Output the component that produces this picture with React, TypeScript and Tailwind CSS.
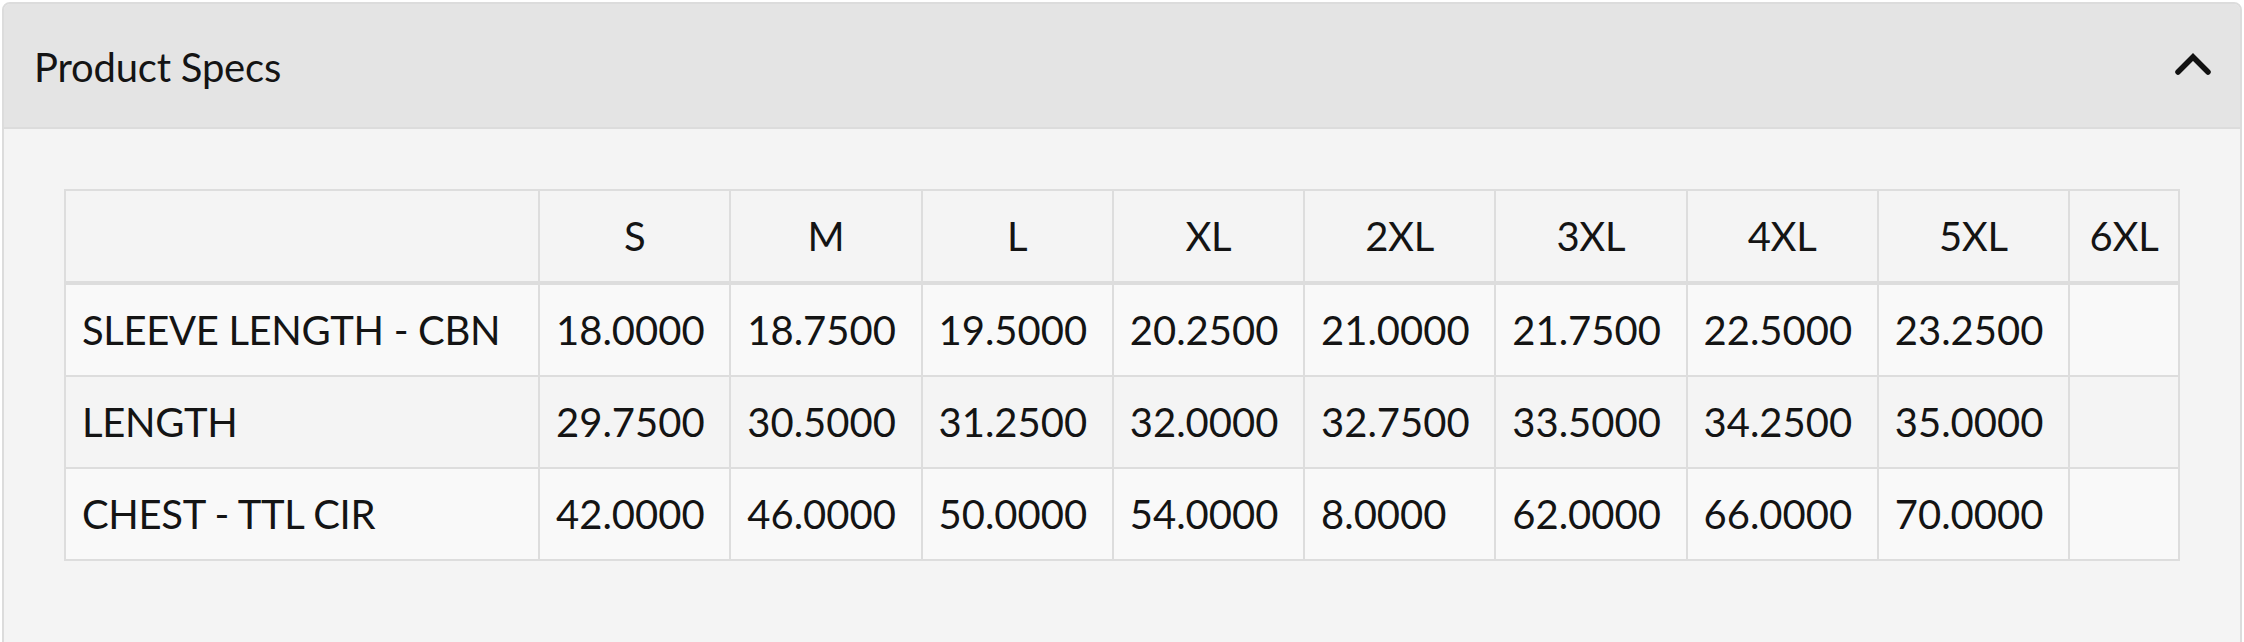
const SIZES = ["S", "M", "L", "XL", "2XL", "3XL", "4XL", "5XL", "6XL"];

const ROWS: { label: string; values: string[] }[] = [
  {
    label: "SLEEVE LENGTH - CBN",
    values: ["18.0000", "18.7500", "19.5000", "20.2500", "21.0000", "21.7500", "22.5000", "23.2500", ""],
  },
  {
    label: "LENGTH",
    values: ["29.7500", "30.5000", "31.2500", "32.0000", "32.7500", "33.5000", "34.2500", "35.0000", ""],
  },
  {
    label: "CHEST - TTL CIR",
    values: ["42.0000", "46.0000", "50.0000", "54.0000", "8.0000", "62.0000", "66.0000", "70.0000", ""],
  },
];

function ChevronUp() {
  return (
    <svg width="38" height="26" viewBox="0 0 38 26" aria-hidden="true" className="-mt-[4px]">
      <polyline
        points="4,21 19,6 34,21"
        fill="none"
        stroke="#111111"
        strokeWidth="5.5"
        strokeLinecap="round"
        strokeLinejoin="miter"
      />
    </svg>
  );
}

export default function App() {
  return (
    <div className="min-h-screen bg-white pl-[2px] pr-[2px] pt-[2px] font-['Lato','Liberation_Sans',sans-serif] text-[#141414]">
      <section className="overflow-hidden rounded-t-[8px] border-2 border-[#dcdcdc] bg-[#f4f4f4]">
        <header className="flex h-[125px] items-center justify-between border-b-2 border-[#dcdcdc] bg-[#e4e4e4] pl-[30px] pr-[28px]">
          <h3 className="pt-[2px] text-[40px] leading-none tracking-[-0.2px]">Product Specs</h3>
          <ChevronUp />
        </header>

        <div className="px-[60px] pb-[120px] pt-[60px]">
          <table className="w-full table-fixed border-collapse border-2 border-[#dddddd] text-[40px] leading-[58px]">
            <colgroup>
              <col className="w-[474px]" />
              {SIZES.slice(0, 8).map((s) => (
                <col key={s} />
              ))}
              <col className="w-[110px]" />
            </colgroup>
            <thead>
              <tr className="bg-[#f4f4f4]">
                <th className="border-2 border-b-4 border-[#dddddd] px-[16px] py-[16px]" />
                {SIZES.map((s) => (
                  <th
                    key={s}
                    className="border-2 border-b-4 border-[#dddddd] px-[16px] py-[16px] text-center font-normal tracking-[-0.3px]"
                  >
                    {s}
                  </th>
                ))}
              </tr>
            </thead>
            <tbody>
              {ROWS.map((row, i) => (
                <tr key={row.label} className={i % 2 === 0 ? "bg-[#f9f9f9]" : "bg-[#f4f4f4]"}>
                  <td className="whitespace-nowrap border-2 border-[#dddddd] px-[16px] py-[16px] tracking-[-0.35px]">
                    {row.label}
                  </td>
                  {row.values.map((v, j) => (
                    <td key={j} className="whitespace-nowrap border-2 border-[#dddddd] px-[16px] py-[16px]">
                      {v}
                    </td>
                  ))}
                </tr>
              ))}
            </tbody>
          </table>
        </div>
      </section>
    </div>
  );
}
